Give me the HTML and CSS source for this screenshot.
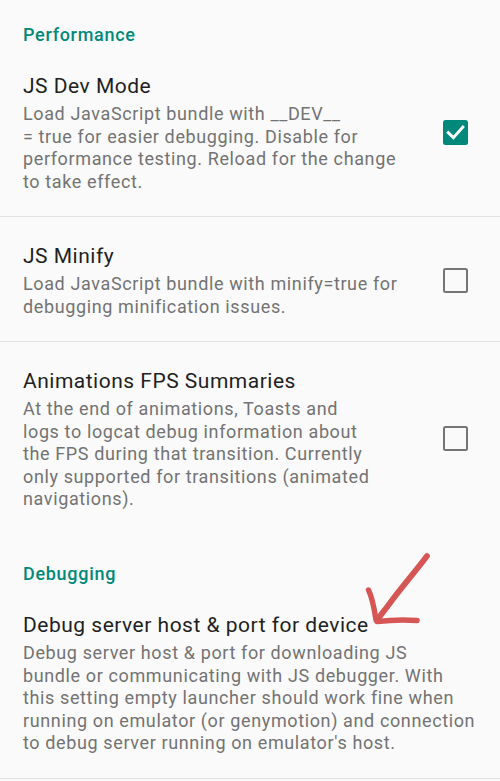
FILE: index.html
```html
<!DOCTYPE html>
<html lang="en">
<head>
<meta charset="utf-8">
<title>Developer settings</title>
<link rel="stylesheet" href="styles.css">
</head>
<body>
<main class="screen">
  <section class="section">
    <h2 class="section-header">Performance</h2>
    <div class="pref">
      <div class="pref-text">
        <div class="pref-title">JS Dev Mode</div>
        <div class="pref-summary">Load JavaScript bundle with __DEV__<br>= true for easier debugging. Disable for<br>performance testing. Reload for the change<br>to take effect.</div>
      </div>
      <div class="checkbox checked">
        <svg viewBox="0 0 25 25" width="25" height="25"><path d="M5.2 12.6 L10.4 17.6 L19.8 7" fill="none" stroke="#fff" stroke-width="2.9" stroke-linecap="square"/></svg>
      </div>
    </div>
    <div class="pref">
      <div class="pref-text">
        <div class="pref-title">JS Minify</div>
        <div class="pref-summary">Load JavaScript bundle with minify=true for<br>debugging minification issues.</div>
      </div>
      <div class="checkbox"></div>
    </div>
    <div class="pref pref-last">
      <div class="pref-text">
        <div class="pref-title">Animations FPS Summaries</div>
        <div class="pref-summary">At the end of animations, Toasts and<br>logs to logcat debug information about<br>the FPS during that transition. Currently<br>only supported for transitions (animated<br>navigations).</div>
      </div>
      <div class="checkbox"></div>
    </div>
  </section>
  <section class="section">
    <h2 class="section-header">Debugging</h2>
    <div class="pref pref-wide">
      <div class="pref-text">
        <div class="pref-title">Debug server host &amp; port for device</div>
        <div class="pref-summary">Debug server host &amp; port for downloading JS<br>bundle or communicating with JS debugger. With<br>this setting empty launcher should work fine when<br>running on emulator (or genymotion) and connection<br>to debug server running on emulator's host.</div>
      </div>
    </div>
  </section>
  <svg class="annotation" viewBox="0 0 80 90" width="80" height="90" aria-hidden="true">
    <g fill="none" stroke="#d65555" stroke-linecap="round" stroke-linejoin="round">
      <path d="M67 11 C55 27 40 44 30 58 C24 66 20 71 17 75" stroke-width="5.8"/>
      <path d="M8.5 45 C12 52 14 62 16 75" stroke-width="5.4"/>
      <path d="M17 76.5 C30 75 44 74.5 57 75.5" stroke-width="5.6"/>
    </g>
  </svg>
</main>
</body>
</html>
```

FILE: styles.css
```css
html, body {
  margin: 0;
  padding: 0;
  background: #fafafa;
}

body {
  font-family: Roboto, "Noto Sans", "Liberation Sans", sans-serif;
  -webkit-font-smoothing: antialiased;
}

.screen {
  position: relative;
  width: 500px;
  height: 781px;
  overflow: hidden;
}

.section-header {
  margin: 0;
  padding: 23px 23px 0;
  font-size: 18px;
  line-height: 24px;
  font-weight: 500;
  letter-spacing: 0.7px;
  color: #00897b;
}

.section + .section .section-header {
  padding-top: 28.5px;
}

.pref {
  display: flex;
  align-items: center;
  padding: 25px 32px 23px 23px;
  border-bottom: 1px solid #e2e2e2;
}

.pref-last {
  border-bottom: none;
}

.pref-wide {
  padding-right: 8px;
}

.pref-text {
  flex: 1;
  min-width: 0;
}

.pref-title {
  font-size: 21px;
  line-height: 28px;
  letter-spacing: 0.5px;
  color: #1f1f1f;
}

.pref-summary {
  margin-top: 3px;
  font-size: 18px;
  line-height: 22.5px;
  letter-spacing: 0.62px;
  color: #737373;
  white-space: nowrap;
}

.checkbox {
  flex: none;
  width: 25px;
  height: 25px;
  margin-left: 12px;
  box-sizing: border-box;
  border: 2.6px solid #757575;
  border-radius: 2.5px;
}

.checkbox.checked {
  border: none;
  background: #00897b;
}

.checkbox svg {
  display: block;
}

.annotation {
  position: absolute;
  left: 360px;
  top: 545px;
}
```
